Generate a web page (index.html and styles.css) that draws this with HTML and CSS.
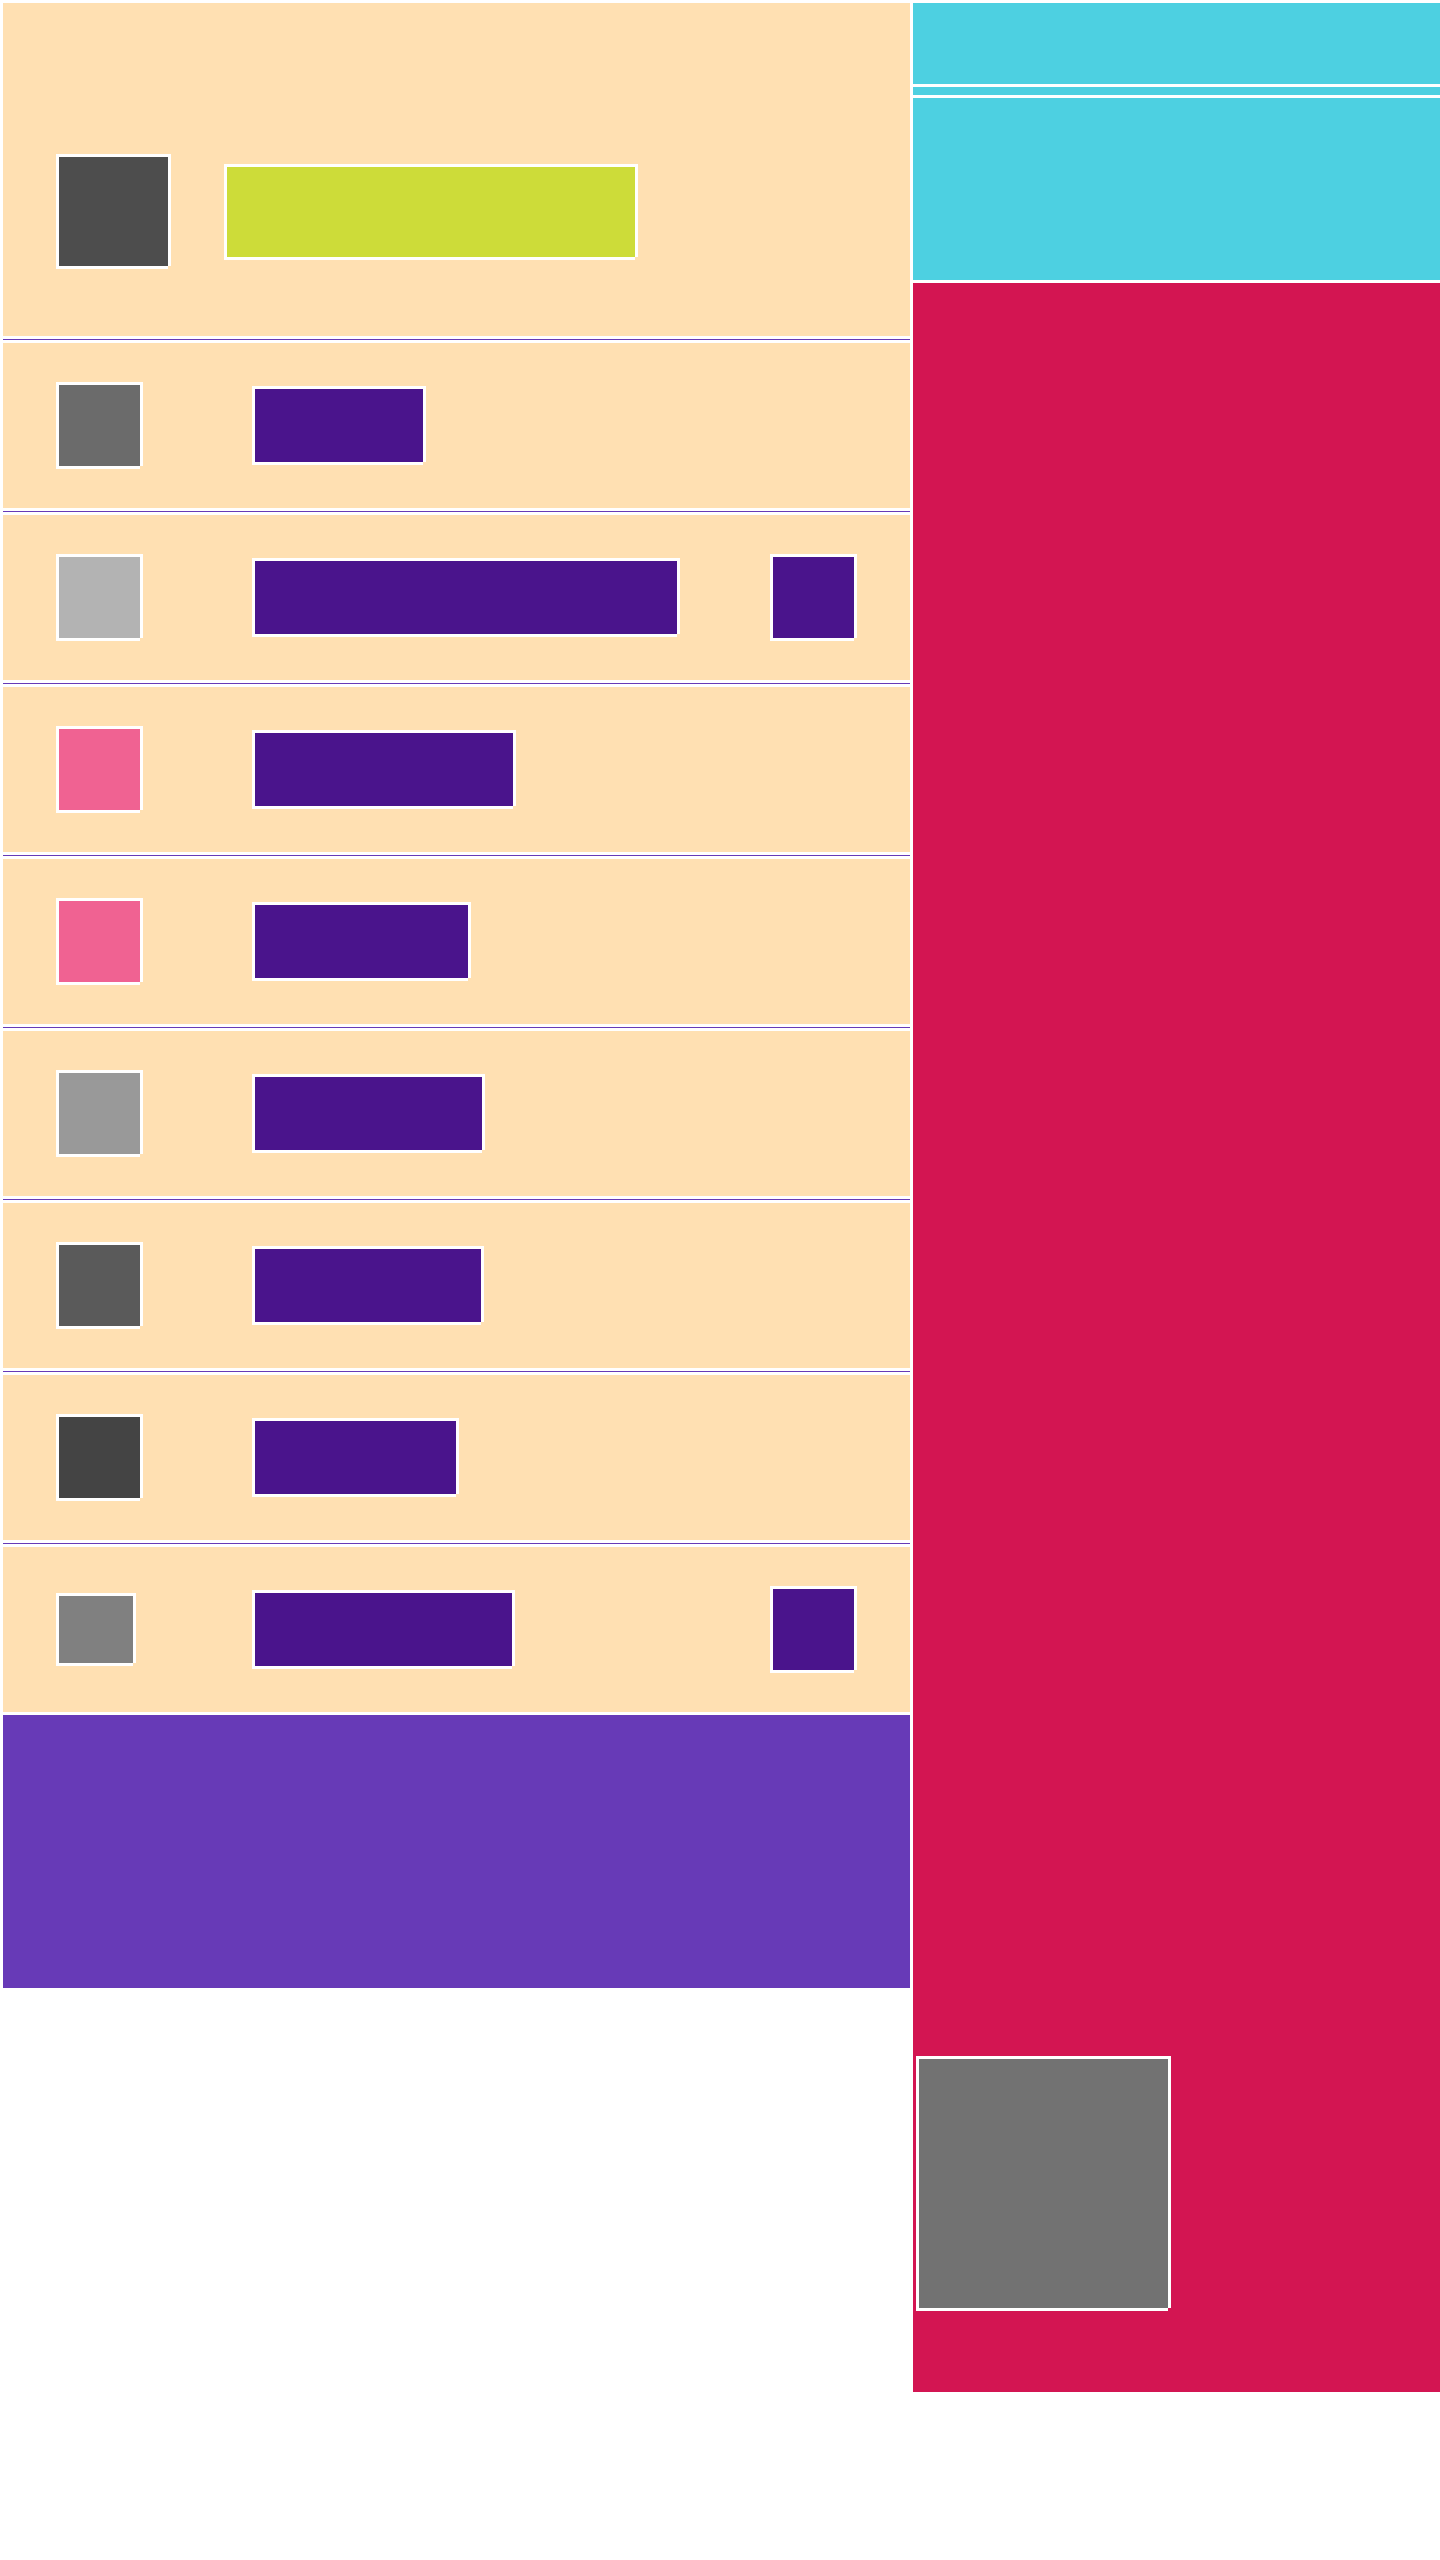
FILE: index.html
```html
<!DOCTYPE html>
<html lang="en">
<head>
<meta charset="utf-8">
<title>Layout</title>
<link rel="stylesheet" href="styles.css">
</head>
<body>
<div class="page">
  <div class="left">
    <header class="head">
      <div class="tile tile-head"></div>
      <div class="tile title-bar"></div>
    </header>
    <div class="divider"></div>
    <div class="row">
      <div class="icon-cell"><div class="tile sq g1"></div></div>
      <div class="tile bar" style="width:168px"></div>
    </div>
    <div class="divider"></div>
    <div class="row">
      <div class="icon-cell"><div class="tile sq g2"></div></div>
      <div class="tile bar" style="width:422px"></div>
      <div class="tile action"></div>
    </div>
    <div class="divider"></div>
    <div class="row">
      <div class="icon-cell"><div class="tile sq pink"></div></div>
      <div class="tile bar" style="width:258px"></div>
    </div>
    <div class="divider"></div>
    <div class="row">
      <div class="icon-cell"><div class="tile sq pink"></div></div>
      <div class="tile bar" style="width:213px"></div>
    </div>
    <div class="divider"></div>
    <div class="row">
      <div class="icon-cell"><div class="tile sq g3"></div></div>
      <div class="tile bar" style="width:227px"></div>
    </div>
    <div class="divider"></div>
    <div class="row">
      <div class="icon-cell"><div class="tile sq g4"></div></div>
      <div class="tile bar" style="width:226px"></div>
    </div>
    <div class="divider"></div>
    <div class="row">
      <div class="icon-cell"><div class="tile sq g5"></div></div>
      <div class="tile bar" style="width:201px"></div>
    </div>
    <div class="divider"></div>
    <div class="row">
      <div class="icon-cell"><div class="tile sq-small g6"></div></div>
      <div class="tile bar" style="width:257px"></div>
      <div class="tile action"></div>
    </div>
    <footer class="foot"></footer>
  </div>
  <div class="right">
    <div class="cyan c1"></div>
    <div class="cyan c2"></div>
    <div class="cyan c3"></div>
    <div class="main">
      <div class="tile media"></div>
    </div>
  </div>
</div>
</body>
</html>
```

FILE: styles.css
```css
html, body {
  margin: 0;
  padding: 0;
  background: #ffffff;
  font-family: "Liberation Sans", Arial, sans-serif;
}

.page {
  display: flex;
  align-items: flex-start;
  gap: 3px;
  padding: 3px 0 0 3px;
}

.left {
  width: 907px;
  flex: 0 0 907px;
  display: flex;
  flex-direction: column;
}

.right {
  flex: 1;
  display: flex;
  flex-direction: column;
  gap: 3px;
}

.tile {
  box-shadow: -3px -3px 0 #fff, 3px -3px 0 #fff, -3px 3px 0 #fff, 3px 0 0 #fff, 0 3px 0 #fff;
  flex: 0 0 auto;
}

.head {
  background: #ffe0b2;
  height: 333px;
  box-sizing: border-box;
  padding: 154px 0 70px 56px;
  display: flex;
  align-items: center;
  gap: 59px;
}

.tile-head {
  width: 109px;
  height: 109px;
  background: #4d4d4d;
}

.title-bar {
  width: 408px;
  height: 90px;
  background: #cddc39;
}

.divider {
  height: 1px;
  margin: 3px 0;
  background: #673ab7;
}

.row {
  background: #ffe0b2;
  height: 165px;
  box-sizing: border-box;
  padding: 0 56px;
  display: flex;
  align-items: center;
}

.icon-cell {
  width: 196px;
  flex: 0 0 196px;
  display: flex;
  align-items: center;
}

.sq {
  width: 81px;
  height: 81px;
}

.sq-small {
  width: 74px;
  height: 67px;
}

.g1 { background: #6b6b6b; }
.g2 { background: #b3b3b3; }
.g3 { background: #999999; }
.g4 { background: #5a5a5a; }
.g5 { background: #444444; }
.g6 { background: #808080; }
.pink { background: #f06292; }

.bar {
  height: 73px;
  background: #4a148c;
}

.action {
  width: 81px;
  height: 81px;
  margin-left: auto;
  background: #4a148c;
}

.foot {
  margin-top: 3px;
  height: 273px;
  background: #673ab7;
}

.cyan {
  background: #4dd0e1;
}

.c1 { height: 81px; }
.c2 { height: 8px; }
.c3 { height: 182px; }

.main {
  background: #d31552;
  height: 2109px;
  box-sizing: border-box;
  padding: 0 0 84px 6px;
  display: flex;
  flex-direction: column;
  justify-content: flex-end;
  align-items: flex-start;
}

.media {
  width: 249px;
  height: 249px;
  background: #727272;
}
```
